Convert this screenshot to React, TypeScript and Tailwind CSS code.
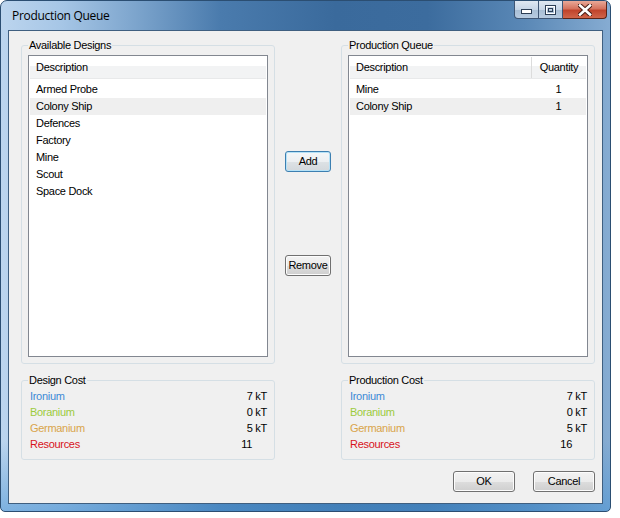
import type { ReactNode } from "react"

const font = "font-['Liberation_Sans',Arial,sans-serif] tracking-[-0.3px]"

const GroupBox = ({ title, className, children }: { title: string; className?: string; children: ReactNode }) => (
    <fieldset className={`border border-[#d5dfe5] rounded-[3px] px-[6px] ${className ?? ""}`}>
        <legend className="px-[1px] text-[11px] leading-[13px] text-black">{title}</legend>
        {children}
    </fieldset>
)

const VistaButton = ({ label, isDefault, className }: { label: string; isDefault?: boolean; className?: string }) => (
    <button
        className={`h-[21px] rounded-[3px] border text-[11px] leading-none text-black ${
            isDefault
                ? "border-[#3c7fb1] shadow-[inset_0_0_0_1px_#b6e2f7] bg-[linear-gradient(180deg,#f4f7f9_0%,#eceff1_50%,#dde2e5_51%,#d3d8dc_100%)]"
                : "border-[#707070] shadow-[inset_0_0_0_1px_#fcfcfc] bg-[linear-gradient(180deg,#f2f2f2_0%,#ebebeb_50%,#dddddd_51%,#cfcfcf_100%)]"
        } ${className ?? ""}`}
    >
        {label}
    </button>
)

const headerBg = "bg-[linear-gradient(180deg,#ffffff_0%,#ffffff_42%,#f2f3f4_43%,#f2f3f4_100%)]"

const designs = ["Armed Probe", "Colony Ship", "Defences", "Factory", "Mine", "Scout", "Space Dock"]
const queue = [
    { name: "Mine", qty: 1 },
    { name: "Colony Ship", qty: 1 },
]

const costRows = (resources: number) => [
    { label: "Ironium", value: "7 kT", color: "text-[#3d8ad6]", pad: "" },
    { label: "Boranium", value: "0 kT", color: "text-[#9ccb3c]", pad: "" },
    { label: "Germanium", value: "5 kT", color: "text-[#d9a44a]", pad: "" },
    { label: "Resources", value: String(resources), color: "text-[#d8121b]", pad: "pr-[15px]" },
]

const CostBox = ({ title, resources }: { title: string; resources: number }) => (
    <GroupBox title={title} className="pb-[7px] pt-[1px]">
        {costRows(resources).map((r) => (
            <div key={r.label} className="flex justify-between h-[16px] items-center text-[11px] pl-[2px] pr-[1px]">
                <span className={r.color}>{r.label}</span>
                <span className={`text-black ${r.pad}`}>{r.value}</span>
            </div>
        ))}
    </GroupBox>
)

const MinGlyph = () => (
    <svg width="11" height="6" viewBox="0 0 11 6">
        <rect x="0.5" y="0.5" width="10" height="4" fill="#ffffff" stroke="#2c3e55" />
    </svg>
)

const MaxGlyph = () => (
    <svg width="11" height="10" viewBox="0 0 11 10">
        <rect x="0.5" y="0.5" width="10" height="9" fill="none" stroke="#2c3e55" />
        <rect x="1.5" y="1.5" width="8" height="7" fill="none" stroke="#ffffff" />
        <rect x="3.5" y="3.5" width="4" height="3" fill="none" stroke="#2c3e55" />
    </svg>
)

const CloseGlyph = () => (
    <svg width="14" height="12" viewBox="0 0 14 12">
        <path d="M2 1.5 L12 10.5 M12 1.5 L2 10.5" stroke="#4a1e16" strokeWidth="4.6" strokeLinecap="square" />
        <path d="M2 1.5 L12 10.5 M12 1.5 L2 10.5" stroke="#ffffff" strokeWidth="2.6" strokeLinecap="square" />
    </svg>
)

const App = () => {
    return (
        <div className={`w-[620px] h-[518px] bg-white ${font}`}>
            <div className="w-[611px] h-[512px] flex flex-col rounded-t-[7px] rounded-b-[5px] border border-[#2b4e72] bg-[linear-gradient(180deg,rgba(0,0,0,0)_0px,rgba(0,0,0,0)_440px,rgba(74,148,212,0.55)_100%),linear-gradient(90deg,#bcd5ee_0%,#a6c6e6_10%,#7da5cd_22%,#4a7bad_36%,#3a6a9c_55%,#3c6c9e_70%,#5a88b6_86%,#86acd2_100%)] overflow-hidden">
                {/* title bar */}
                <div className="h-[29px] flex justify-between items-start shrink-0">
                    <span className="pl-[11px] pt-[8px] text-[12px] leading-[14px] text-black font-['Open_Sans',Arial,sans-serif] tracking-[-0.3px]">
                        Production Queue
                    </span>
                    <div className="flex mr-[3px]">
                        <div className="w-[25px] h-[18px] flex items-center justify-center pt-[4px] border border-t-0 border-[#3f5674] rounded-bl-[4px] bg-[linear-gradient(180deg,#dfe8f2_0%,#c6d5e6_50%,#a8bed5_51%,#b7cbe0_100%)]">
                            <MinGlyph />
                        </div>
                        <div className="w-[24px] h-[18px] flex items-center justify-center border border-t-0 border-l-0 border-[#3f5674] bg-[linear-gradient(180deg,#dfe8f2_0%,#c6d5e6_50%,#a8bed5_51%,#b7cbe0_100%)]">
                            <MaxGlyph />
                        </div>
                        <div className="w-[44px] h-[18px] flex items-center justify-center border border-t-0 border-l-0 border-[#5a2418] rounded-br-[4px] bg-[linear-gradient(180deg,#e9a998_0%,#d5735e_45%,#c0442c_55%,#d0654a_100%)]">
                            <CloseGlyph />
                        </div>
                    </div>
                </div>

                {/* client area */}
                <div className="flex-1 mx-[7px] mb-[7px] border border-[#3f5f80] bg-[#f0f0f0] pl-[12px] pr-[7px] pt-[8px] pb-[11px] flex flex-col">
                    <div className="grid grid-cols-[254px_66px_254px]">
                        <GroupBox title="Available Designs" className="pt-[3px] pb-[6px]">
                            <div className="h-[302px] border border-[#828790] bg-white p-[1px]">
                                <div className={`h-[22px] flex items-center pl-[6px] text-[11px] border-b border-[#e8e9ea] ${headerBg}`}>
                                    Description
                                </div>
                                <div className="mt-[2px]">
                                    {designs.map((d) => (
                                        <div
                                            key={d}
                                            className={`h-[17px] flex items-center pl-[6px] text-[11px] text-black ${d === "Colony Ship" ? "bg-[#efefef]" : ""}`}
                                        >
                                            {d}
                                        </div>
                                    ))}
                                </div>
                            </div>
                        </GroupBox>

                        <div className="flex flex-col items-center pt-[112px]">
                            <VistaButton label="Add" isDefault className="w-[46px]" />
                            <VistaButton label="Remove" className="w-[46px] mt-[83px]" />
                        </div>

                        <GroupBox title="Production Queue" className="pt-[3px] pb-[6px]">
                            <div className="h-[302px] border border-[#828790] bg-white p-[1px]">
                                <div className={`h-[22px] flex text-[11px] border-b border-[#e8e9ea] ${headerBg}`}>
                                    <div className="flex-1 flex items-center pl-[6px]">Description</div>
                                    <div className="w-[55px] flex items-center justify-center border-l border-[#dcdcdc]">Quantity</div>
                                </div>
                                <div className="mt-[2px]">
                                    {queue.map((q) => (
                                        <div
                                            key={q.name}
                                            className={`h-[17px] flex items-center text-[11px] text-black ${q.name === "Colony Ship" ? "bg-[#efefef]" : ""}`}
                                        >
                                            <span className="flex-1 pl-[6px]">{q.name}</span>
                                            <span className="w-[55px] text-center">{q.qty}</span>
                                        </div>
                                    ))}
                                </div>
                            </div>
                        </GroupBox>
                    </div>

                    <div className="grid grid-cols-[254px_66px_254px] mt-[10px]">
                        <CostBox title="Design Cost" resources={11} />
                        <div />
                        <CostBox title="Production Cost" resources={16} />
                    </div>

                    <div className="mt-auto flex justify-end gap-[18px]">
                        <VistaButton label="OK" className="w-[62px]" />
                        <VistaButton label="Cancel" className="w-[62px]" />
                    </div>
                </div>
            </div>
        </div>
    )
}

export default App
